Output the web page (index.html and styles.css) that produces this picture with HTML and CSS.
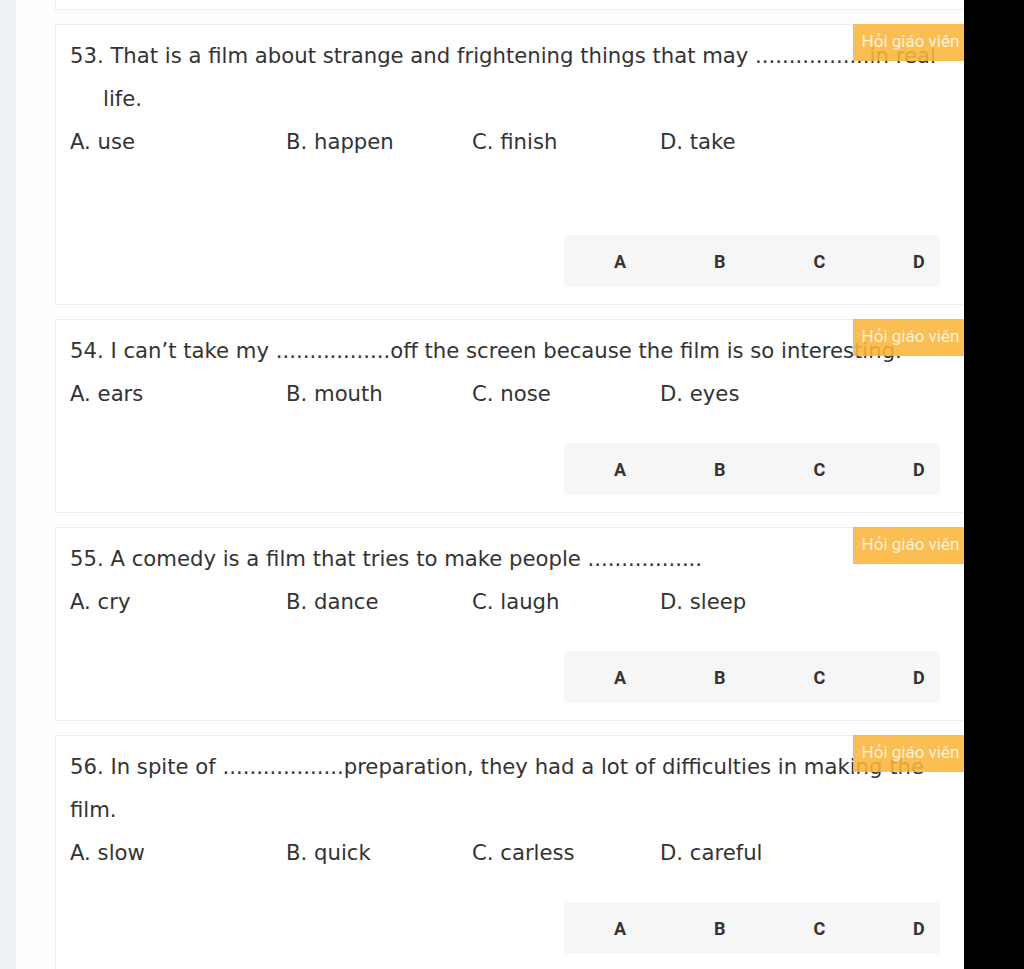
FILE: index.html
```html
<!DOCTYPE html>
<html lang="vi">
<head>
  <meta charset="UTF-8">
  <meta name="viewport" content="width=device-width, initial-scale=1.0">
  <title>Câu hỏi trắc nghiệm</title>
  <link rel="stylesheet" href="styles.css">
</head>
<body>

  <div class="side-left"></div>

  <div class="feed">
    <!-- tail of the previous question -->
    <div class="card stub"></div>

    <!-- Question 53 -->
    <div class="card">
      <span class="ask">Hỏi giáo viên</span>
      <p class="line">53. That is a film about strange and frightening things that may .................in real</p>
      <p class="line indent">life.</p>
      <div class="options">
        <span>A. use</span>
        <span>B. happen</span>
        <span>C. finish</span>
        <span>D. take</span>
      </div>
      <p class="line blank"></p>
      <div class="answers">
        <button>A</button>
        <button>B</button>
        <button>C</button>
        <button>D</button>
      </div>
    </div>

    <!-- Question 54 -->
    <div class="card">
      <span class="ask">Hỏi giáo viên</span>
      <p class="line">54. I can’t take my .................off the screen because the film is so interesting.</p>
      <div class="options">
        <span>A. ears</span>
        <span>B. mouth</span>
        <span>C. nose</span>
        <span>D. eyes</span>
      </div>
      <div class="answers">
        <button>A</button>
        <button>B</button>
        <button>C</button>
        <button>D</button>
      </div>
    </div>

    <!-- Question 55 -->
    <div class="card">
      <span class="ask">Hỏi giáo viên</span>
      <p class="line">55. A comedy is a film that tries to make people .................</p>
      <div class="options">
        <span>A. cry</span>
        <span>B. dance</span>
        <span>C. laugh</span>
        <span>D. sleep</span>
      </div>
      <div class="answers">
        <button>A</button>
        <button>B</button>
        <button>C</button>
        <button>D</button>
      </div>
    </div>

    <!-- Question 56 -->
    <div class="card">
      <span class="ask">Hỏi giáo viên</span>
      <p class="line">56. In spite of ..................preparation, they had a lot of difficulties in making the</p>
      <p class="line">film.</p>
      <div class="options">
        <span>A. slow</span>
        <span>B. quick</span>
        <span>C. carless</span>
        <span>D. careful</span>
      </div>
      <div class="answers">
        <button>A</button>
        <button>B</button>
        <button>C</button>
        <button>D</button>
      </div>
    </div>
  </div>

  <div class="side-right"></div>

</body>
</html>
```

FILE: styles.css
```css
/* page frame: grey strip, feed, black strip */
body {
  margin: 0;
  height: 969px;
  display: flex;
  overflow: hidden;
  font-family: "DejaVu Sans", sans-serif;
  color: #333;
  background: #fdfdfd;
}

.side-left {
  width: 16px;
  flex-shrink: 0;
  background: #edf0f4;
}

.side-right {
  width: 60px;
  flex-shrink: 0;
  background: #000;
  position: relative;
  z-index: 2;
}

.feed {
  flex: 1;
  padding-left: 39px;
  overflow: hidden;
}

.card {
  position: relative;
  background: #fff;
  border: 1px solid #ededed;
  border-right: none;
  padding: 9px 24px 17px 14px;
  margin-bottom: 14px;
}

.card.stub {
  height: 9px;
  padding: 0;
  border-top: none;
}

.line {
  margin: 0;
  height: 43px;
  line-height: 43px;
  font-size: 21.2px;
  white-space: nowrap;
}

.line.indent {
  padding-left: 33px;
}

.line.blank {
  height: 44px;
}

.options {
  display: grid;
  grid-template-columns: 216px 186px 188px auto;
  height: 43px;
  line-height: 43px;
  font-size: 21.2px;
}

/* grey answer bar */
.answers {
  width: 376px;
  height: 52px;
  margin: 28px 0 0 auto;
  padding: 0 14px 0 49px;
  box-sizing: border-box;
  background: #f6f6f6;
  border-radius: 4px;
  display: flex;
  justify-content: space-between;
  align-items: center;
}

.answers button {
  border: none;
  background: none;
  padding: 0;
  width: 14px;
  font-family: Roboto, "Liberation Sans", sans-serif;
  font-weight: bold;
  font-size: 18px;
  color: #333;
  cursor: pointer;
}

/* orange badge sits over the corner of the card */
.ask {
  position: absolute;
  top: -1px;
  right: 0;
  width: 111px;
  height: 37px;
  padding: 0 0 3px 4px;
  box-sizing: border-box;
  display: flex;
  align-items: center;
  justify-content: center;
  background: rgba(251, 181, 58, 0.88);
  color: rgba(255, 250, 232, 0.92);
  font-family: Roboto, "Liberation Sans", sans-serif;
  font-size: 17px;
  white-space: nowrap;
}
```
